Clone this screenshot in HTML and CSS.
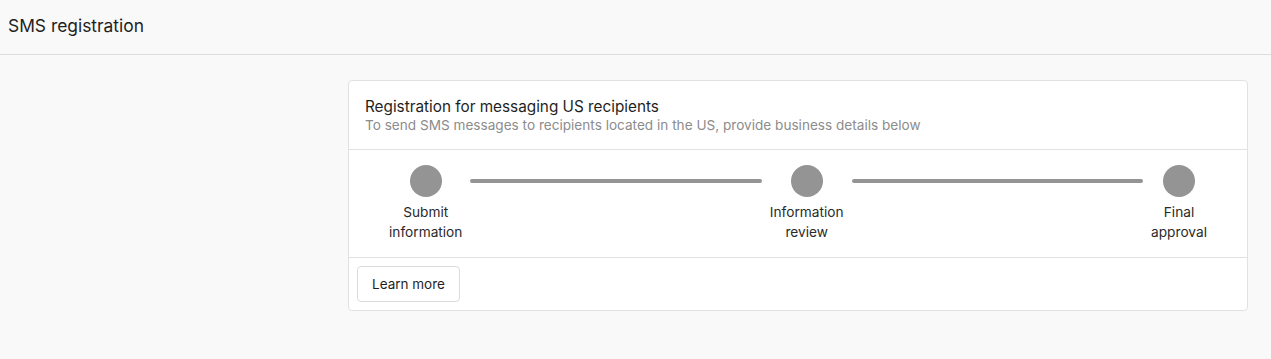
FILE: index.html
```html
<!DOCTYPE html>
<html lang="en">
<head>
    <meta charset="UTF-8">
    <meta name="viewport" content="width=device-width, initial-scale=1.0">
    <title>SMS registration</title>
    <link rel="stylesheet" href="styles.css">
</head>
<body>
    <header class="page-header">
        <h1>SMS registration</h1>
    </header>

    <main class="layout">
        <div class="side"></div>

        <section class="card">
            <div class="card-head">
                <h2>Registration for messaging US recipients</h2>
                <p>To send SMS messages to recipients located in the US, provide business details below</p>
            </div>

            <div class="steps">
                <div class="step">
                    <span class="dot"></span>
                    <span class="label">Submit<br>information</span>
                </div>
                <span class="line"></span>
                <div class="step">
                    <span class="dot"></span>
                    <span class="label">Information<br>review</span>
                </div>
                <span class="line"></span>
                <div class="step">
                    <span class="dot"></span>
                    <span class="label">Final<br>approval</span>
                </div>
            </div>

            <div class="card-foot">
                <button type="button" class="btn">Learn more</button>
            </div>
        </section>
    </main>
</body>
</html>
```

FILE: styles.css
```css
body {
    font-family: Inter, "Noto Sans", sans-serif;
    margin: 0;
    padding: 0;
    background-color: #f9f9f9;
    color: #1f1f1f;
}
.page-header {
    height: 54px;
    display: flex;
    align-items: center;
    padding: 0 8px;
    border-bottom: 1px solid #dedede;
}
.page-header h1 {
    margin: 0;
    margin-top: -3px;
    font-size: 17.4px;
    font-weight: 400;
}
.layout {
    display: flex;
    padding: 25px 23px 0 8px;
}
.side {
    width: 340px;
    flex-shrink: 0;
}
.card {
    flex: 1;
    background-color: white;
    border: 1px solid #e1e1e1;
    border-radius: 4px;
}
.card-head {
    padding: 16px 16px;
    border-bottom: 1px solid #e1e1e1;
}
.card-head h2 {
    margin: 0;
    font-size: 15.3px;
    font-weight: 400;
    line-height: 20px;
}
.card-head p {
    margin: 0;
    font-size: 13.6px;
    line-height: 16px;
    color: #8c8c8c;
}
.steps {
    display: flex;
    align-items: flex-start;
    gap: 8px;
    padding: 15px 40px 15px;
    border-bottom: 1px solid #e1e1e1;
}
.step {
    display: flex;
    flex-direction: column;
    align-items: center;
}
.dot {
    width: 32px;
    height: 32px;
    border-radius: 50%;
    background-color: #949494;
}
.label {
    margin-top: 5px;
    font-size: 13.7px;
    line-height: 20px;
    text-align: center;
    color: #2a2a2a;
}
.line {
    flex: 1;
    height: 4px;
    margin-top: 14px;
    border-radius: 2px;
    background-color: #949494;
}
.card-foot {
    padding: 8px;
}
.btn {
    height: 36px;
    padding: 0 14px;
    background-color: white;
    border: 1px solid #dcdcdc;
    border-radius: 4px;
    font-family: inherit;
    font-size: 13.5px;
    color: #1f1f1f;
    cursor: pointer;
}
```
